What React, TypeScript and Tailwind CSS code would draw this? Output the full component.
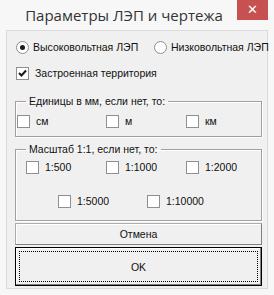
import React from "react";

function Box({ checked = false }: { checked?: boolean }) {
  return (
    <span className="flex h-[13px] w-[13px] shrink-0 items-center justify-center border border-[#8e8f8f] bg-white">
      {checked && (
        <svg width="9" height="9" viewBox="0 0 9 9">
          <path d="M1 4 L3.5 6.5 L8 1.5" fill="none" stroke="#1a1a1a" strokeWidth="2" />
        </svg>
      )}
    </span>
  );
}

function Check({ label, checked = false, w }: { label: string; checked?: boolean; w: string }) {
  return (
    <div className={`flex shrink-0 items-center gap-[6px] whitespace-nowrap ${w}`}>
      <Box checked={checked} />
      <span>{label}</span>
    </div>
  );
}

function Radio({ label, on = false }: { label: string; on?: boolean }) {
  return (
    <div className="flex items-center gap-[4px] whitespace-nowrap">
      <span className="flex h-[13px] w-[13px] shrink-0 items-center justify-center rounded-full border border-[#8e8f8f] bg-white">
        {on && <span className="h-[5px] w-[5px] rounded-full bg-[#1a1a1a]" />}
      </span>
      <span>{label}</span>
    </div>
  );
}

export default function App() {
  return (
    <div className="relative h-[295px] w-[274px] bg-[#f7f7f7] font-['Liberation_Sans',sans-serif] text-[10.5px] leading-[14px] text-[#111]">
      <div className="flex h-[30px] items-center justify-center pr-[26px] font-['Open_Sans',sans-serif] text-[15px] leading-[20px] text-[#333]">
        Параметры ЛЭП и чертежа
      </div>
      <div className="absolute right-[6px] top-0 flex h-[20px] w-[31px] items-center justify-center bg-[#c75050] text-[13px] text-white">
        ✕
      </div>

      <div className="mx-[6px] h-[259px] border border-[#dadada] bg-[#f0f0f0] pl-[8px] pr-[5px]">
        <div className="mt-[9px] flex h-[14px] items-center">
          <div className="w-[139px] shrink-0 pl-[1px]">
            <Radio label="Высоковольтная ЛЭП" on />
          </div>
          <Radio label="Низковольтная ЛЭП" />
        </div>
        <div className="mt-[12px] flex h-[14px] items-center pl-[1px]">
          <Check label="Застроенная территория" checked w="" />
        </div>

        <fieldset className="mt-[14px] w-[247px] border border-[#a0a0a0] pb-[8px] pt-[6px] shadow-[inset_1px_1px_0_#fff,1px_1px_0_#fff]">
          <legend className="ml-[10px] px-[3px]">Единицы в мм, если нет, то:</legend>
          <div className="flex h-[14px] items-center pl-[1px]">
            <Check label="см" w="w-[89px]" />
            <Check label="м" w="w-[80px]" />
            <Check label="км" w="" />
          </div>
        </fieldset>

        <fieldset className="mt-[5px] w-[247px] border border-[#a0a0a0] pb-[12px] pt-[4px] shadow-[inset_1px_1px_0_#fff,1px_1px_0_#fff]">
          <legend className="ml-[10px] px-[3px]">Масштаб 1:1, если нет, то:</legend>
          <div className="flex h-[14px] items-center pl-[10px]">
            <Check label="1:500" w="w-[80px]" />
            <Check label="1:1000" w="w-[80px]" />
            <Check label="1:2000" w="" />
          </div>
          <div className="mt-[20px] flex h-[14px] items-center pl-[42px]">
            <Check label="1:5000" w="w-[89px]" />
            <Check label="1:10000" w="" />
          </div>
        </fieldset>

        <div className="mt-[2px] flex h-[22px] w-[247px] items-center justify-center border border-[#adadad] border-b-[#808080] border-r-[#808080] bg-[#f0f0f0] shadow-[inset_1px_1px_0_#fff]">
          Отмена
        </div>
        <div className="mt-[2px] h-[39px] w-[247px] border border-black bg-[#f0f0f0] p-[3px] shadow-[inset_-1px_-1px_0_#808080,inset_1px_1px_0_#fff]">
          <div className="flex h-full w-full items-center justify-center border border-dotted border-black">
            OK
          </div>
        </div>
      </div>
    </div>
  );
}
